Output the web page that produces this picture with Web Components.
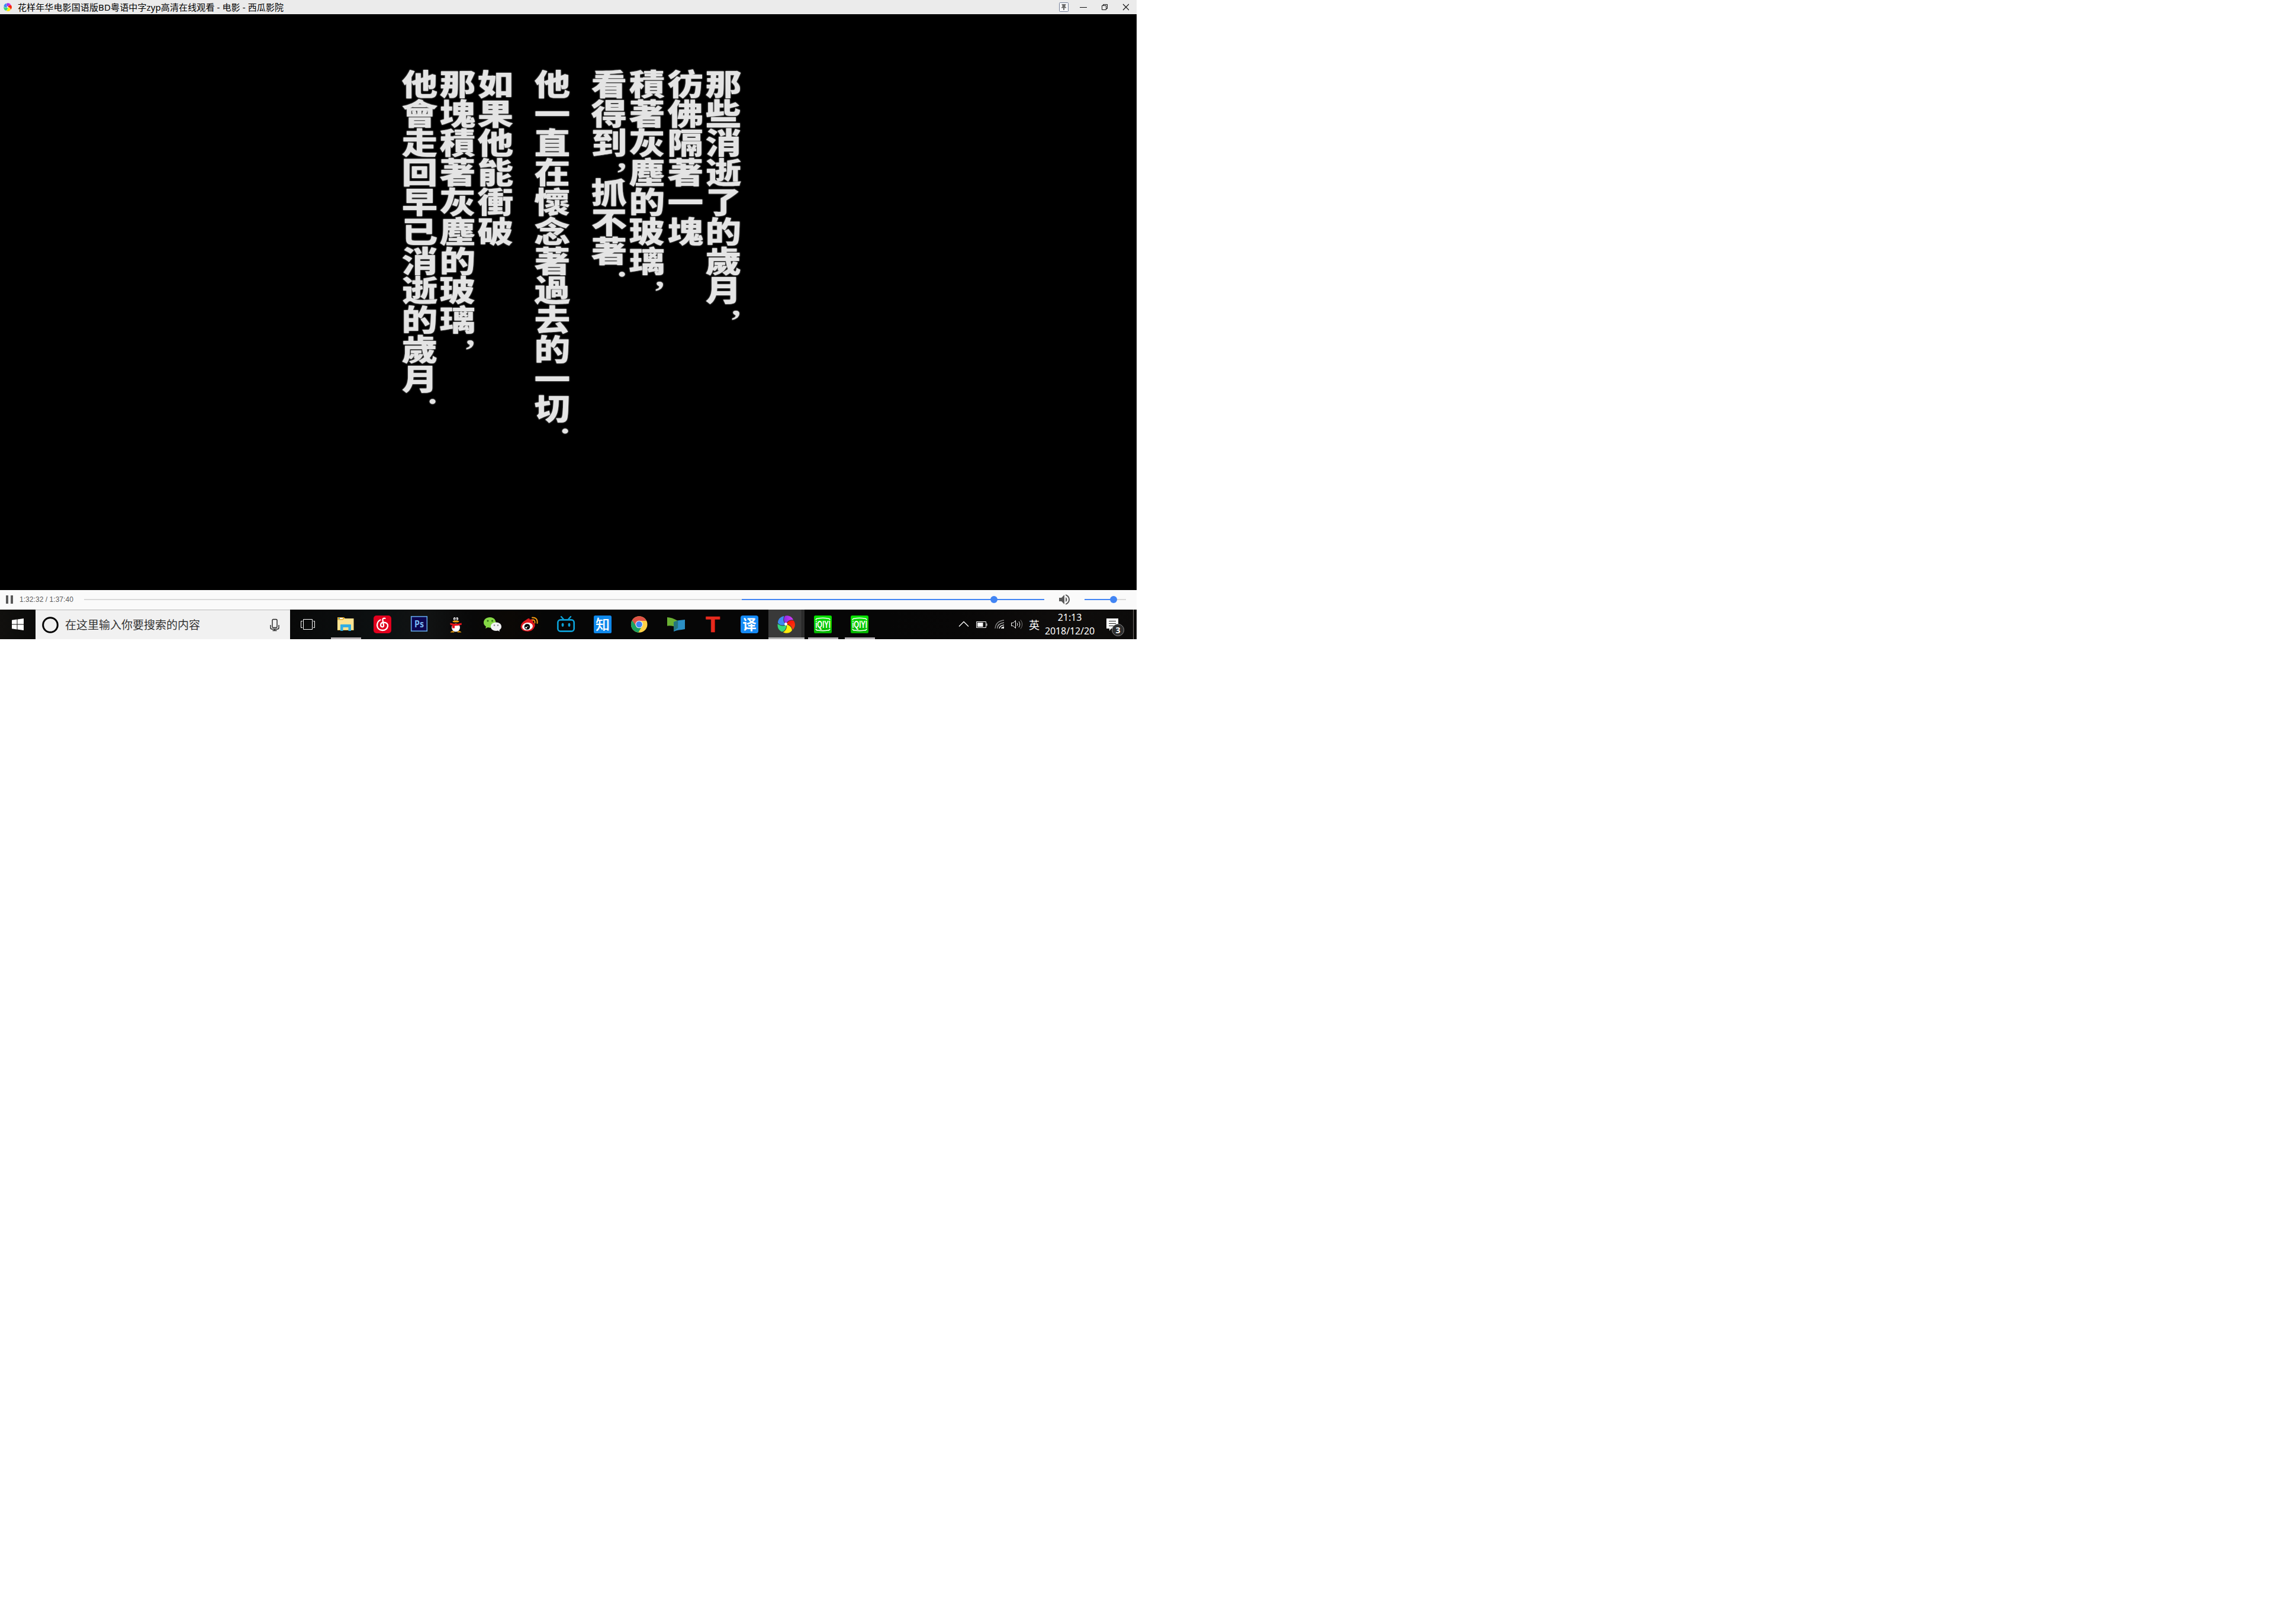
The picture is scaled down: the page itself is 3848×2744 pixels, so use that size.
<!DOCTYPE html>
<html lang="zh">
<head>
<meta charset="utf-8">
<title>西瓜影院</title>
<style>
html,body{margin:0;background:#fff}
body{font-family:"Noto Sans","Noto Sans CJK SC",sans-serif}
</style>
</head>
<body>
<desk-screen></desk-screen>
<script>
const define = (name, html) => {
  const t = document.createElement('template');
  t.innerHTML = html;
  customElements.define(name, class extends HTMLElement {
    constructor() {
      super();
      this.attachShadow({mode: 'open'}).append(t.content.cloneNode(true));
    }
  });
};

// Five-petal pinwheel shared by the title bar and the taskbar
const petal = (c, a) => `<path fill="${c}" transform="rotate(${a} 15 15)" d="M15 14.500C11 11.500 10.500 4 14 .7C19 -.3 24.500 1.500 27.500 8C22 7.500 17 9 15 14.500Z"/>`;
const pinwheel = size => `<svg width="${size}" height="${size}" viewBox="0 0 30 30">
<defs><linearGradient id="pu"><stop stop-color="#8a2be8"/><stop offset="1" stop-color="#d93cf0"/></linearGradient>
<linearGradient id="re"><stop stop-color="#fb1508"/><stop offset="1" stop-color="#f7430f"/></linearGradient></defs>
${petal('url(#pu)',-3)}${petal('url(#re)',69)}${petal('#fdec0a',141)}${petal('#35d97b',213)}${petal('#3d8bf2',285)}
<circle cx="14.500" cy="14.500" r="2.400" fill="#fff"/></svg>`;

define('title-bar', `
<style>
:host{display:flex;align-items:center;height:24px;background:#ebebeb;color:#000;box-sizing:border-box;padding:0 13px 0 6px}
.name{font-size:15px;line-height:24px;height:24px;margin-left:10px;white-space:pre;letter-spacing:.12px}
.btns{margin-left:auto;display:flex;align-items:center}
</style>
${pinwheel(14)}
<span class="name"><slot></slot></span>
<div class="btns">
<svg width="118" height="24" viewBox="0 0 118 24" fill="none">
<rect x=".5" y="4.500" width="15" height="15" rx="1" fill="#f7f7f9" stroke="#75809a"/>
<path fill="#6b6b6b" d="M4.500 7h7v1.500h-1v3.500h1.500v1.500H9V17H7v-3.500H4V12H5.500V8.500h-1z"/>
<path stroke="#111" d="M35 12.500h12M72.500 9.500h7v7h-7zM74.500 9v-1.500h7v7h-1.500"/>
<path stroke="#111" stroke-width="1.200" d="M108 7l10 10M118 7l-10 10"/>
</svg></div>`);

// One vertical line of the intertitle; glyphs are stretched sideways
define('title-line', `
<style>
:host{display:block;width:64.300px}
div{margin:0 auto;display:flex;flex-direction:column;width:49.800px;transform:scaleX(1.22);color:#e4e4e4;text-shadow:0 0 2px #c4c4c4}
::slotted(b){display:block;width:49.800px;writing-mode:vertical-rl;text-orientation:upright;font:900 49.800px/49.800px "Noto Sans CJK TC",sans-serif;white-space:nowrap}
::slotted(i){display:block;font:bold 50px/0 "Liberation Serif",serif;height:34px;text-align:right}
</style><div><slot></slot></div>`);

define('movie-frame', `
<style>
:host{display:flex;flex-direction:row-reverse;align-items:flex-start;gap:31.700px;height:973px;background:#000;box-sizing:border-box;padding:93px 667px 0 0}
section{display:flex;flex-direction:row-reverse}
</style>
<section>
<title-line><b>那些消逝了的歲月</b><i>,</i></title-line>
<title-line><b>彷佛隔著一塊</b></title-line>
<title-line><b>積著灰塵的玻璃</b><i>,</i></title-line>
<title-line><b>看得到</b><i>,</i><b>抓不著</b><i>.</i></title-line>
</section>
<section><title-line><b>他一直在懷念著過去的一切</b><i>.</i></title-line></section>
<section>
<title-line><b>如果他能衝破</b></title-line>
<title-line><b>那塊積著灰塵的玻璃</b><i>,</i></title-line>
<title-line><b>他會走回早已消逝的歲月</b><i>.</i></title-line>
</section>`);

define('player-bar', `
<style>
:host{display:flex;align-items:center;height:33px;background:#fafafa;box-sizing:border-box;padding:0 18px 1px 10px}
.pause{width:4px;height:14px;border:solid #5a5a5a;border-width:0 4px}
time{font:12px "Liberation Sans",sans-serif;color:#5a5a5a;margin-left:11px;width:109px;white-space:nowrap;letter-spacing:.05px}
.track{height:2px;display:flex;align-items:center}
.seek{width:1622px;background:linear-gradient(90deg,#d9d9d9 1111px,#4285f4 0)}
.vol{width:70px;margin-left:25px;background:linear-gradient(90deg,#4285f4 49px,#d9d9d9 0)}
b{width:12px;height:12px;border-radius:50%;background:#4285f4}
.seek b{margin-left:1531px}.vol b{margin-left:43px}
svg{margin-left:25px}
</style>
<div class="pause"></div><time>1:32:32 / 1:37:40</time>
<div class="track seek"><b></b></div>
<svg width="18" height="18" viewBox="3 3 18 18" fill="#5a5a5a"><path d="M3 9v6h4l5 5V4L7 9H3zm13.500 3c0-1.770-1.020-3.290-2.500-4.030v8.050c1.480-.73 2.500-2.250 2.500-4.020zM14 3.230v2.060c2.890.86 5 3.540 5 6.710s-2.110 5.850-5 6.710v2.060c4.010-.91 7-4.490 7-8.770s-2.990-7.860-7-8.770z"/></svg>
<div class="track vol"><b></b></div>`);

define('search-box', `
<style>
:host{display:flex;align-items:center;width:430px;height:50px;box-sizing:border-box;background:#f1f1f1;border-top:1px solid #b9b9b9;padding:0 17px 0 11px}
span{font:19px/48px "Noto Sans CJK SC",sans-serif;color:#333;margin:0 auto 1px 11px}
svg{display:block}
</style>
<svg width="28" height="28" viewBox="0 0 28 28"><circle cx="14" cy="14" r="12.300" fill="none" stroke="#000" stroke-width="3"/></svg>
<span><slot></slot></span>
<svg width="18" height="22" viewBox="0 0 18 22" fill="none" stroke="#222" stroke-width="1.400"><rect x="5" y="1.500" width="8" height="14" rx="1.500"/><path d="M2 11v4.500q0 2.500 2.500 2.500h9q2.500 0 2.500-2.500V11M9 18v2.500M5.500 20.500h7"/></svg>`);

define('task-item', `
<style>
:host{display:flex;width:62px;height:50px;align-items:center;justify-content:center;box-sizing:border-box}
:host([open]){border-bottom:3px solid #b5b1b4;width:51px;margin:0 5px 0 6px;padding:3px 1px 0 0}
:host([active]){width:61px;margin:0 0 0 1px;background:linear-gradient(90deg,#393939 56px,#222 56px,#222 57px,#2d2d2d 57px);border-bottom:3px solid #b3b3b3;padding:3px 1px 0 0}
</style><slot></slot>`);

const icon = body => `<svg width="32" height="32" viewBox="0 0 32 32">${body}</svg>`;
const iqiyi = icon(`<defs><linearGradient id="gq" x2="0" y2="1"><stop stop-color="#08e400"/><stop offset="1" stop-color="#05b500"/></linearGradient></defs>
<rect x="1" y="1" width="30" height="30" rx="2.500" fill="url(#gq)"/>
<path d="M4 8.500Q4.500 6 7.500 6Q16 4.500 24.500 6Q27.500 6 28 8.500M4 23.500Q4.500 26 7.500 26Q16 27.500 24.500 26Q27.500 26 28 23.500" fill="none" stroke="#fff" stroke-width="1.500"/>
<text x="3.200" y="21.800" textLength="25.800" lengthAdjust="spacingAndGlyphs" font-family="Liberation Sans" font-weight="700" font-size="16.500" fill="#fff">iQIYI</text>`);

define('task-bar', `
<style>
:host{display:flex;align-items:center;height:50px;color:#fff;background:linear-gradient(90deg,#11100e 0,#0b0b0a 60px,#090909 490px,#0c1011 640px,#111313 720px,#080808 800px,#0b0805 860px,#060606 920px,#060606 1500px,#080707 1620px,#0f0d0c 1800px,#0c0b0a)}
svg{display:block;overflow:visible}
.start{padding:0 20px}
.view{padding:0 21px 0 18px}
.tray{margin-left:auto;display:flex;align-items:center;height:50px}
.lang{font:18px/50px "Noto Sans CJK SC",sans-serif;margin:0 0 1px 9px}
.clock{width:88px;margin-left:7px;text-align:center;font:16px/23px "Noto Sans","Open Sans",sans-serif;letter-spacing:-.1px}
.note{margin:10px 0 0 18px}
.edge{width:1px;height:50px;background:#77716e;margin:0 5px 0 14px}
</style>
<svg class="start" width="20" height="20" viewBox="0 0 20 20" fill="#fff"><path d="M0 2.800L8.500 1.600V9.500H0zM9.500 1.400L20 0V9.500H9.500zM0 10.500H8.500V18.400L0 17.200zM9.500 10.500H20V20L9.500 18.600z"/></svg>
<search-box>在这里输入你要搜索的内容</search-box>
<svg class="view" width="24" height="18" viewBox="0 0 24 18" fill="none" stroke="#fff"><path d="M4.500.5h15v17h-15zM3 3.500H.5v11H3M21 3.500h2.500v11H21"/></svg>
<task-item open>${icon(`<path fill="#e6ae2c" d="M2 4h11l2 2v6H2z"/><path fill="#fff" d="M4 5h7v2H4z"/><path fill="#35a3c8" d="M4 5h2v2H4z"/><path fill="#fee391" d="M2 8.500h9L14 6h15.500v20H2z"/><path fill="#eec558" d="M2 25h27v1H2z"/><path fill="#33aee2" d="M7 17q0-1 1-1h16q1 0 1 1v10h-4.500v-6h-9v6H7z"/>`)}</task-item>
<task-item>${icon(`<rect x="1" y="1" width="30" height="30" rx="5" fill="#e2001e"/><path d="M20.500 5.800Q16 5 16.500 9L18 17Q18.500 20 16 20.300Q13 20.200 13 17Q13.200 13 18 12.500Q25.500 13 25 19Q23.500 26 16 26Q7.500 25.500 7 17.500Q7.500 10.500 12.500 8.500" fill="none" stroke="#fff" stroke-width="2.300" stroke-linecap="round"/>`)}</task-item>
<task-item>${icon(`<rect x="2.700" y="2.700" width="26.600" height="24.600" fill="#0c0650" stroke="#62a7e6" stroke-width="1.600"/><text x="8" y="20.500" textLength="16" lengthAdjust="spacingAndGlyphs" font-family="Open Sans" font-weight="700" font-size="15.500" fill="#79b8f2">Ps</text>`)}</task-item>
<task-item>${icon(`<path fill="#0b0b0d" d="M8 13Q8 2 16 2Q24 2 24 13Q28 18 27.500 24Q26 25 24.500 22Q24 29 16 29Q8 29 7.500 22Q6 25 4.500 24Q4 18 8 13z"/><ellipse cx="16" cy="21.500" rx="7" ry="7" fill="#fff"/><path d="M7.500 28.500q3-2.500 6 0v1h-7zM18.500 28.500q3-2.500 6 0l1 1h-7z" fill="#f4a20b"/><path fill="#e6141c" d="M6.500 13.500q9.500 3 19 0l.5 3q-5 2-12 2v4h-4v-5l-3.500-1z"/><ellipse cx="13.800" cy="6.500" rx="1.900" ry="2.600" fill="#fff"/><ellipse cx="18.200" cy="6.500" rx="1.900" ry="2.600" fill="#fff"/><circle cx="14.300" cy="7" r=".9"/><circle cx="17.700" cy="7" r=".9"/><ellipse cx="16" cy="11" rx="5.500" ry="1.600" fill="#f8a70c"/>`)}</task-item>
<task-item>${icon(`<path fill="#85d845" d="M11.500 4C5.500 4 1 7.800 1 13q0 4 4 6.800L4 23l4-2q10 2.500 13.500-5Q22.500 4.500 11.500 4z"/><circle cx="8" cy="10" r="1.500" fill="#2c6a14"/><circle cx="15.500" cy="10" r="1.500" fill="#2c6a14"/><path fill="#f2f2f4" d="M22 12.500c-5 0-9 3-9 7.300s4 7.200 9 7.200l3-.5 3 1.500-.5-2.500q3.500-2.200 3.500-5.700c0-4.300-4-7.300-9-7.300z"/><circle cx="19" cy="17.500" r="1.200" fill="#808086"/><circle cx="25" cy="17.500" r="1.200" fill="#808086"/>`)}</task-item>
<task-item>${icon(`<g transform="translate(.5)"><path fill="#e0191f" d="M10 8.500q6-5 6.500-.5q5-2 5.500 1.500v3q4 2 3 6.500Q22 27.500 13 28Q1.500 27.500 1 20Q1.500 13 10 8.500z"/><ellipse cx="12.500" cy="19.500" rx="9" ry="6.500" fill="#fff" transform="rotate(-7 13 19.500)"/><circle cx="12" cy="20" r="4.800" fill="#050505"/><circle cx="10.300" cy="21.500" r="1.500" fill="#fff"/><circle cx="13" cy="19.500" r=".8" fill="#fff"/><path d="M21 8.500q4.500-.5 4 5M20.500 4.500q9.500-.5 8.500 9.500" fill="none" stroke="#f59a10" stroke-width="1.900" stroke-linecap="round"/></g>`)}</task-item>
<task-item>${icon(`<g fill="none" stroke="#0c9fd5" stroke-linecap="round"><rect x="2.300" y="8.300" width="27.400" height="19.400" rx="4.500" stroke-width="2.700"/><path stroke-width="2.400" d="M8 3l4 4.500M24 3l-4 4.500"/></g><ellipse cx="10.500" cy="16.800" rx="1.900" ry="3.100" fill="#0c9fd5"/><ellipse cx="21.500" cy="16.800" rx="1.900" ry="3.100" fill="#0c9fd5"/>`)}</task-item>
<task-item>${icon(`<rect x="1" y="1" width="30" height="30" rx="2.500" fill="#0f88eb"/><text x="16" y="24.500" text-anchor="middle" font-family="Noto Sans CJK SC" font-weight="500" font-size="24" fill="#fff">知</text>`)}</task-item>
<task-item>${icon(`<g transform="translate(-.3)"><circle cx="16" cy="16" r="13.800" fill="#fdd047"/><path fill="#de5246" d="M4 9.100A13.800 13.800 0 0 1 28 9.200L28.500 10H16L10 19z"/><path fill="#1aa260" d="M4 9.100A13.800 13.800 0 0 0 14.500 29.700L21 19L10.500 18.500z"/><circle cx="16" cy="16" r="6.300" fill="#f2f2f2"/><circle cx="16" cy="16" r="5.200" fill="#4285f4"/></g>`)}</task-item>
<task-item>${icon(`<path fill="#6ab033" d="M1 4q8 0 18 6v12q-9-5-18-3.500z"/><path fill="#2b8fc4" d="M31 8v16q-6 1-10 1.500-5 .5-9 2.500V12q6-3 10-3z"/><path fill="#24757d" d="M12 12q4-2 7.200-2.200V22l-7.200 5z"/>`)}</task-item>
<task-item>${icon(`<text x="16" y="29" text-anchor="middle" textLength="24" lengthAdjust="spacingAndGlyphs" font-family="Liberation Sans" font-weight="700" font-size="37" fill="#e72a1d" stroke="#e72a1d" stroke-width=".7">T</text>`)}</task-item>
<task-item>${icon(`<rect x="1" y="1" width="30" height="30" rx="4" fill="#158af5"/><text x="16" y="24.500" text-anchor="middle" font-family="Noto Sans CJK SC" font-weight="700" font-size="23.500" fill="#fff">译</text>`)}</task-item>
<task-item active>${pinwheel(30)}</task-item>
<task-item open>${iqiyi}</task-item>
<task-item open>${iqiyi}</task-item>
<div class="tray">
<svg width="110" height="22" viewBox="0 0 110 22" fill="none" stroke="#fff"><path stroke-width="1.300" d="M1 14.500L9 6.500L17 14.500"/>
<path d="M30.500 6.500h16v10h-16zM48 9.500v4"/><path fill="#fff" stroke="none" d="M32 8h9.500v7H32z"/>
<g stroke-width="1.300"><path stroke="#888" d="M62 18Q63 5.500 77 4"/><path stroke="#aaa" d="M65.500 18Q66 9.500 77 8"/><path d="M69 18Q69.500 13 77 11.800"/><path d="M72.500 18Q73 16 77 15"/></g><circle cx="75.500" cy="16.800" r="1.500" fill="#fff" stroke="none"/>
<path d="M89.500 8.500h3l4-4v13l-4-4h-3zM99 8.500q2 2.500 0 5M102 6q3.500 5 0 10"/><path stroke="#777" d="M105 3.500q5.500 7.500 0 15"/></svg>
<span class="lang">英</span>
<div class="clock">21:13<br>2018/12/20</div>
<svg class="note" width="31" height="32" viewBox="0 0 31 32"><path fill="#fff" d="M0 1h20v17H8l-3 4V18H0z"/><path stroke="#222" d="M4 5.500h12M4 9.500h12M4 13.500h12"/><circle cx="19.500" cy="20.500" r="10" fill="#2e2e2e" stroke="#8a8a8a"/><text x="19.500" y="25.500" text-anchor="middle" font-family="Open Sans" font-weight="700" font-size="14" fill="#fff">3</text></svg>
<div class="edge"></div>
</div>`);

define('desk-screen', `
<style>:host{display:flex;flex-direction:column;width:1920px;height:1080px;overflow:hidden}</style>
<title-bar>花样年华电影国语版BD粤语中字zyp高清在线观看 - 电影 - 西瓜影院</title-bar>
<movie-frame></movie-frame>
<player-bar></player-bar>
<task-bar></task-bar>`);
</script>
</body>
</html>
